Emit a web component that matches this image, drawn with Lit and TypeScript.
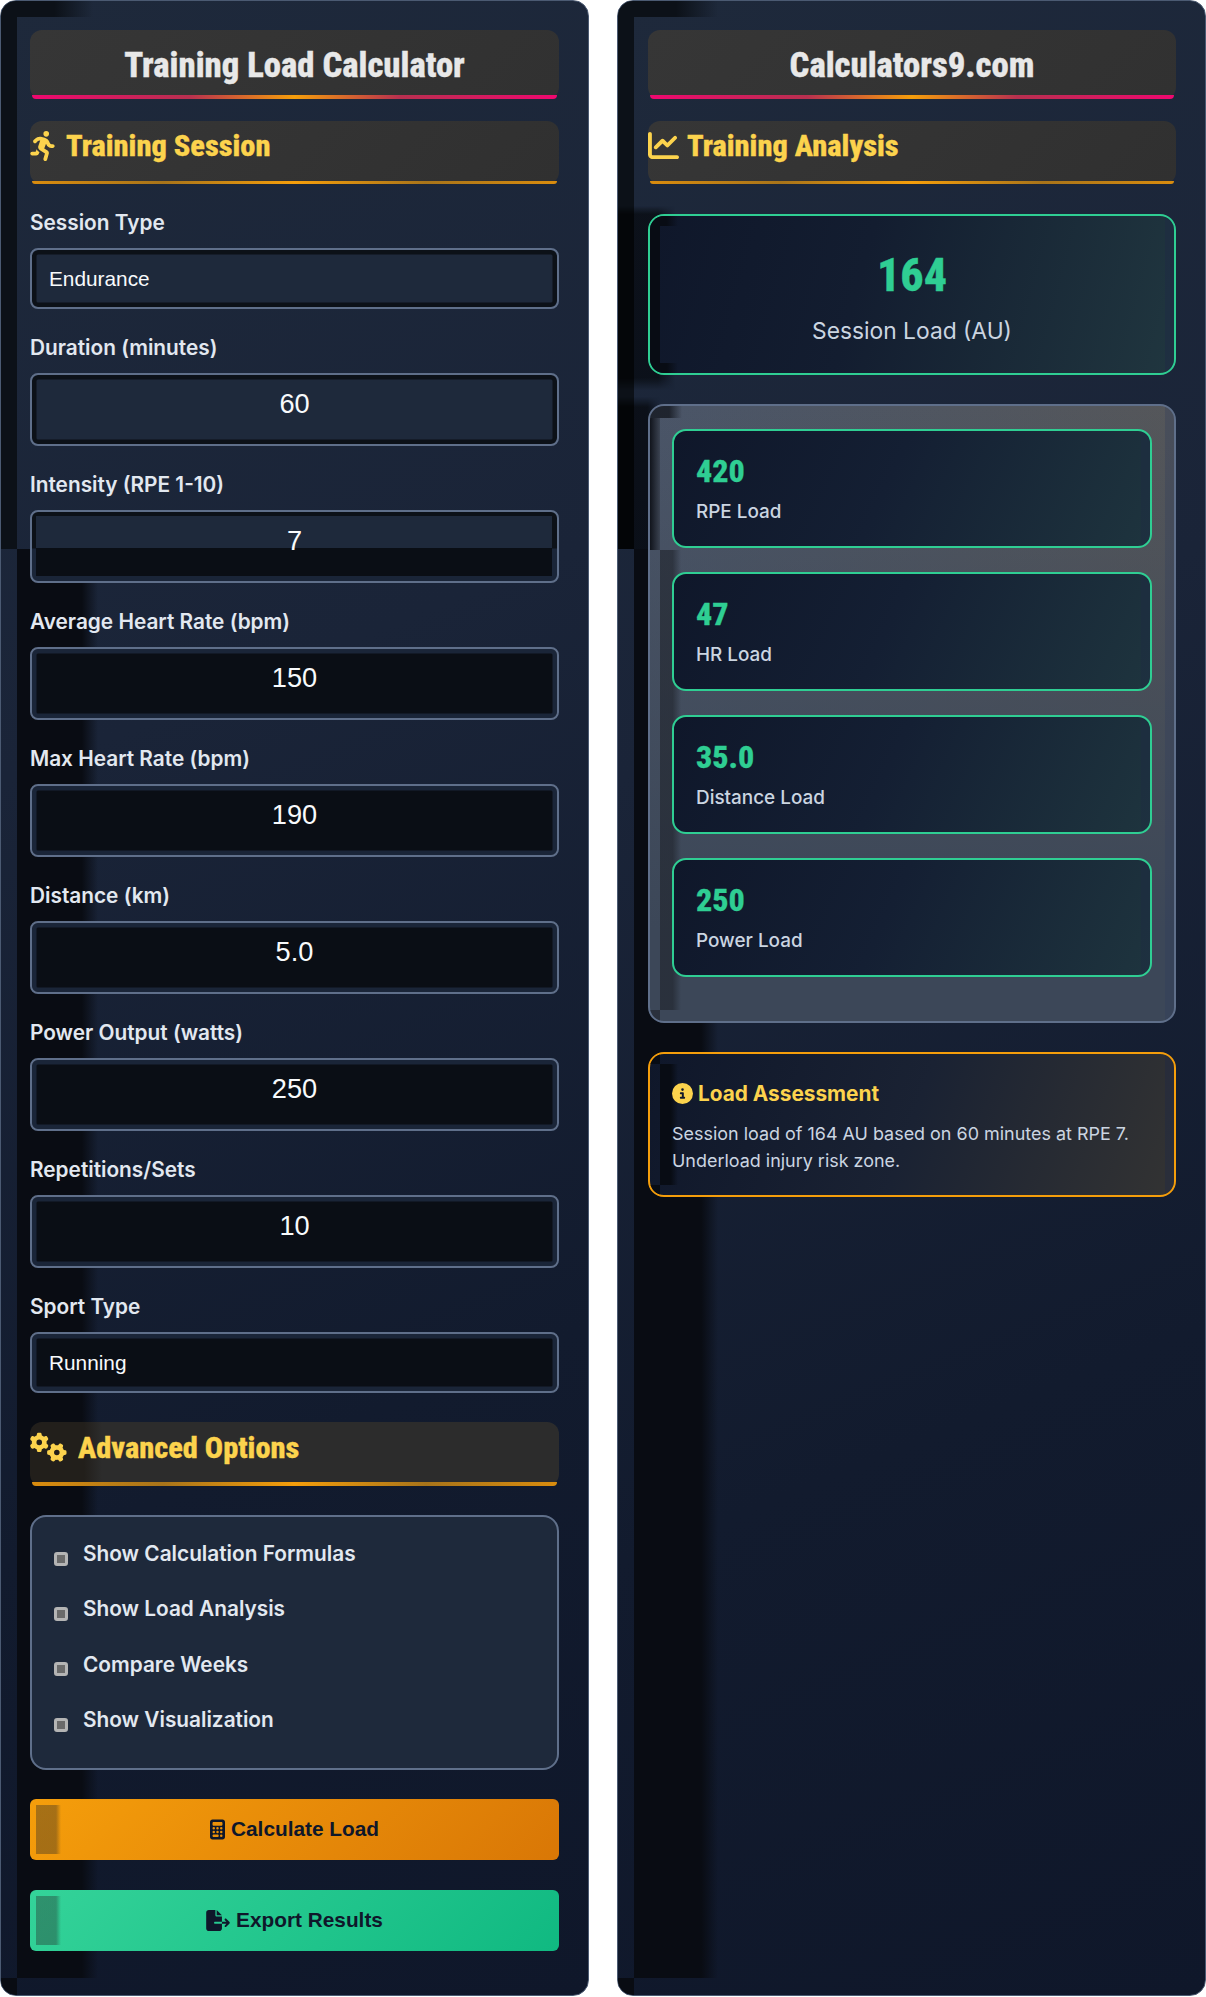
import { LitElement, html, css, svg } from "lit";
import { customElement } from "lit/decorators.js";

const ICONS: Record<string, [string, string]> = {
  run: ["0 0 417 512", "M320 48a48 48 0 1 0-96 0 48 48 0 1 0 96 0zM125.7 175.5c9.9-9.9 23.4-15.5 37.5-15.5c1.9 0 3.8 .1 5.6 .3L137.6 254c-9.3 28 1.7 58.8 26.8 74.5l86.2 53.9-25.4 88.8c-4.9 17 5 34.7 22 39.6s34.7-5 39.6-22l28.7-100.4c5.9-20.6-2.6-42.6-20.7-53.9L238 299l30.9-82.4 5.1 12.3C289 264.7 323.9 288 362.7 288H384c17.7 0 32-14.3 32-32s-14.3-32-32-32H362.7c-12.9 0-24.6-7.8-29.5-19.7l-6.3-15c-14.6-35.1-44.1-61.9-80.5-73.1l-48.7-15c-11.1-3.4-22.7-5.2-34.4-5.2c-31 0-60.8 12.3-82.7 34.3L57.4 153.4c-12.5 12.5-12.5 32.8 0 45.3s32.8 12.5 45.3 0l23.1-23.1zM91.2 352H32c-17.7 0-32 14.3-32 32s14.3 32 32 32h69.6c19 0 36.2-11.2 43.9-28.5L157 361.6l-9.5-6c-17.5-10.9-30.5-26.8-37.9-44.9L91.2 352z"],
  chart: ["0 0 512 512", "M64 64c0-17.7-14.3-32-32-32S0 46.3 0 64V400c0 44.2 35.8 80 80 80H480c17.7 0 32-14.3 32-32s-14.3-32-32-32H80c-8.8 0-16-7.2-16-16V64zm406.6 86.6c12.5-12.5 12.5-32.8 0-45.3s-32.8-12.5-45.3 0L320 210.7l-57.4-57.4c-12.5-12.5-32.8-12.5-45.3 0l-112 112c-12.5 12.5-12.5 32.8 0 45.3s32.8 12.5 45.3 0L240 221.3l57.4 57.4c12.5 12.5 32.8 12.5 45.3 0l128-128z"],
  gears: ["0 0 640 512", "M308.5 135.3c7.1-6.3 9.9-16.2 6.2-25c-2.3-5.3-4.8-10.5-7.6-15.5L304 89.4c-3-5-6.3-9.9-9.8-14.6c-5.7-7.6-15.7-10.1-24.7-7.1l-28.2 9.3c-10.7-8.8-23-16-36.2-20.9L199 27.1c-1.9-9.3-9.1-16.7-18.5-17.8C173.9 8.4 167.2 8 160.4 8h-.7c-6.8 0-13.5 .4-20.1 1.2c-9.4 1.1-16.6 8.6-18.5 17.8L115 56.1c-13.3 5-25.5 12.1-36.2 20.9L50.5 67.8c-9-3-19-.5-24.7 7.1c-3.5 4.7-6.8 9.6-9.9 14.6l-3 5.3c-2.8 5-5.3 10.2-7.6 15.6c-3.7 8.7-.9 18.6 6.2 25l22.2 19.8C32.6 161.9 32 168.9 32 176s.6 14.1 1.7 20.9L11.5 216.7c-7.1 6.3-9.9 16.2-6.2 25c2.3 5.3 4.8 10.5 7.6 15.6l3 5.2c3 5.1 6.3 9.9 9.9 14.6c5.7 7.6 15.7 10.1 24.7 7.1l28.2-9.3c10.7 8.8 23 16 36.2 20.9l6.1 29.1c1.9 9.3 9.1 16.7 18.5 17.8c6.7 .8 13.5 1.2 20.4 1.2s13.7-.4 20.4-1.2c9.4-1.1 16.6-8.6 18.5-17.8l6.1-29.1c13.3-5 25.5-12.1 36.2-20.9l28.2 9.3c9 3 19 .5 24.7-7.1c3.5-4.7 6.8-9.5 9.8-14.6l3.1-5.4c2.8-5 5.3-10.2 7.6-15.5c3.7-8.7 .9-18.6-6.2-25l-22.2-19.8c1.1-6.8 1.7-13.8 1.7-20.9s-.6-14.1-1.7-20.9l22.2-19.8zM112 176a48 48 0 1 1 96 0 48 48 0 1 1 -96 0zM504.7 500.5c6.3 7.1 16.2 9.9 25 6.2c5.3-2.3 10.5-4.8 15.5-7.6l5.4-3.1c5-3 9.9-6.3 14.6-9.8c7.6-5.7 10.1-15.7 7.1-24.7l-9.3-28.2c8.8-10.7 16-23 20.9-36.2l29.1-6.1c9.3-1.9 16.7-9.1 17.8-18.5c.8-6.7 1.2-13.5 1.2-20.4s-.4-13.7-1.2-20.4c-1.1-9.4-8.6-16.6-17.8-18.5L583.9 307c-5-13.3-12.1-25.5-20.9-36.2l9.3-28.2c3-9 .5-19-7.1-24.7c-4.7-3.5-9.6-6.8-14.6-9.9l-5.3-3c-5-2.8-10.2-5.3-15.6-7.6c-8.7-3.7-18.6-.9-25 6.2l-19.8 22.2c-6.8-1.1-13.8-1.7-20.9-1.7s-14.1 .6-20.9 1.7l-19.8-22.2c-6.3-7.1-16.2-9.9-25-6.2c-5.3 2.3-10.5 4.8-15.6 7.6l-5.2 3c-5.1 3-9.9 6.3-14.6 9.9c-7.6 5.7-10.1 15.7-7.1 24.7l9.3 28.2c-8.8 10.7-16 23-20.9 36.2L315.1 313c-9.3 1.9-16.7 9.1-17.8 18.5c-.8 6.7-1.2 13.5-1.2 20.4s.4 13.7 1.2 20.4c1.1 9.4 8.6 16.6 17.8 18.5l29.1 6.1c5 13.3 12.1 25.5 20.9 36.2l-9.3 28.2c-3 9-.5 19 7.1 24.7c4.7 3.5 9.5 6.8 14.6 9.8l5.4 3.1c5 2.8 10.2 5.3 15.5 7.6c8.7 3.7 18.6 .9 25-6.2l19.8-22.2c6.8 1.1 13.8 1.7 20.9 1.7s14.1-.6 20.9-1.7l19.8 22.2zM464 304a48 48 0 1 1 0 96 48 48 0 1 1 0-96z"],
  calc: ["0 0 384 512", "M64 0C28.7 0 0 28.7 0 64V448c0 35.3 28.7 64 64 64H320c35.3 0 64-28.7 64-64V64c0-35.3-28.7-64-64-64H64zM96 64H288c17.7 0 32 14.3 32 32v32c0 17.7-14.3 32-32 32H96c-17.7 0-32-14.3-32-32V96c0-17.7 14.3-32 32-32zm32 160a32 32 0 1 1 -64 0 32 32 0 1 1 64 0zM96 352a32 32 0 1 1 0-64 32 32 0 1 1 0 64zM64 416c0-17.7 14.3-32 32-32h96c17.7 0 32 14.3 32 32s-14.3 32-32 32H96c-17.7 0-32-14.3-32-32zM192 256a32 32 0 1 1 0-64 32 32 0 1 1 0 64zm32 64a32 32 0 1 1 -64 0 32 32 0 1 1 64 0zm64-64a32 32 0 1 1 0-64 32 32 0 1 1 0 64zm32 64a32 32 0 1 1 -64 0 32 32 0 1 1 64 0zM288 448a32 32 0 1 1 0-64 32 32 0 1 1 0 64z"],
  file: ["0 0 576 512", "M0 64C0 28.7 28.7 0 64 0H224V128c0 17.7 14.3 32 32 32H384V288H216c-13.3 0-24 10.7-24 24s10.7 24 24 24H384V448c0 35.3-28.7 64-64 64H64c-35.3 0-64-28.7-64-64V64zM384 336V288H494.1l-39-39c-9.4-9.4-9.4-24.6 0-33.9s24.6-9.4 33.9 0l80 80c9.4 9.4 9.4 24.6 0 33.9l-80 80c-9.4 9.4-24.6 9.4-33.9 0s-9.4-24.6 0-33.9l39-39H384zm0-208H256V0L384 128z"],
  info: ["0 0 512 512", "M256 512A256 256 0 1 0 256 0a256 256 0 1 0 0 512zM216 336h24V272H216c-13.3 0-24-10.7-24-24s10.7-24 24-24h48c13.3 0 24 10.7 24 24v88h8c13.3 0 24 10.7 24 24s-10.7 24-24 24H216c-13.3 0-24-10.7-24-24s10.7-24 24-24zm40-208a32 32 0 1 1 0 64 32 32 0 1 1 0-64z"],
};

function icon(name: string, cls: string) {
  const [vb, d] = ICONS[name];
  return html`<svg class="ico ${cls}" viewBox=${vb} aria-hidden="true">${svg`<path fill="currentColor" d=${d}></path>`}</svg>`;
}

type Field = { label: string; value: string; kind: "select" | "number"; tone: "light" | "split" | "dark" };

const FIELDS: Field[] = [
  { label: "Session Type", value: "Endurance", kind: "select", tone: "light" },
  { label: "Duration (minutes)", value: "60", kind: "number", tone: "light" },
  { label: "Intensity (RPE 1-10)", value: "7", kind: "number", tone: "split" },
  { label: "Average Heart Rate (bpm)", value: "150", kind: "number", tone: "dark" },
  { label: "Max Heart Rate (bpm)", value: "190", kind: "number", tone: "dark" },
  { label: "Distance (km)", value: "5.0", kind: "number", tone: "dark" },
  { label: "Power Output (watts)", value: "250", kind: "number", tone: "dark" },
  { label: "Repetitions/Sets", value: "10", kind: "number", tone: "dark" },
  { label: "Sport Type", value: "Running", kind: "select", tone: "dark" },
];

const OPTIONS = ["Show Calculation Formulas", "Show Load Analysis", "Compare Weeks", "Show Visualization"];
const STATS = [
  ["420", "RPE Load"],
  ["47", "HR Load"],
  ["35.0", "Distance Load"],
  ["250", "Power Load"],
];

@customElement("app-root")
export class AppRoot extends LitElement {
  static styles = css`
    :host {
      display: block;
      width: 1206px;
      background: #fff;
      font-family: Inter, "Liberation Sans", sans-serif;
    }
    * { box-sizing: border-box; }
    .page {
      display: grid;
      grid-template-columns: 589px 589px;
      column-gap: 28px;
      min-height: 1996px;
    }
    .panel {
      position: relative;
      isolation: isolate;
      height: 1996px;
      padding: 29px 29px 0;
      border: 1px solid #4b5a72;
      border-radius: 16px;
      overflow: hidden;
      background: linear-gradient(158deg, #1e293b 0%, #1a2438 35%, #121b2e 70%, #0f172a 100%);
    }
    .panel.right { padding-left: 30px; }
    .content { position: relative; z-index: 1; }

    /* Dark bands baked into the panel's backdrop. */
    .band { position: absolute; z-index: 0; pointer-events: none; }
    .band-top { left: 0; top: 0; width: 92px; height: 16px; background: linear-gradient(90deg, #0c1118 0 58%, transparent); }
    .band-upper { left: 0; top: 16px; width: 16px; height: 532px; background: #0c1118; }
    .band-lower { left: 16px; top: 548px; width: 81px; bottom: 17px; background: linear-gradient(90deg, #090c13 0 80%, transparent); }
    .band-corner { left: 0; bottom: 0; width: 16px; height: 17px; background: #090c13; }
    .right .band-lower { width: 84px; }
    .right .band-top { width: 100px; }
    .halo-a {
      left: 0; top: 205px; width: 57px; height: 184px;
      background: linear-gradient(90deg, rgba(0,0,0,.62) 0 16px, rgba(6,9,14,.72) 16px 70%, transparent);
      -webkit-mask-image: linear-gradient(180deg, transparent, #000 8px, #000 172px, transparent);
      mask-image: linear-gradient(180deg, transparent, #000 8px, #000 172px, transparent);
    }
    .halo-b {
      left: 0; top: 396px; width: 42px; height: 152px;
      background: linear-gradient(90deg, rgba(0,0,0,.7) 0 16px, rgba(6,9,14,.75) 16px 70%, transparent);
      -webkit-mask-image: linear-gradient(180deg, transparent, #000 10px);
      mask-image: linear-gradient(180deg, transparent, #000 10px);
    }

    .title, .section {
      position: relative;
      font-family: "Roboto Condensed", Roboto, sans-serif;
      font-stretch: 75%;
      font-weight: 800;
      -webkit-text-stroke: 0.35px currentColor;
      margin: 0;
    }
    .title {
      height: 68.5px;
      line-height: 70px;
      text-align: center;
      font-size: 34.7px;
      color: #e8e8e8;
      border-radius: 12px;
      background: linear-gradient(135deg, #363636, #313131);
      margin-bottom: 22px;
    }
    .title::after, .section::after {
      content: "";
      position: absolute;
      left: 2px;
      right: 2px;
      bottom: 0;
      height: 3.5px;
      border-radius: 0 0 10px 10px;
    }
    .title::after { background: linear-gradient(90deg, #f0086f, #b8304f 30%, #f59e0b 50%, #b8304f 70%, #f0086f); }
    .section::after { background: linear-gradient(90deg, #d98c0e, #a8741a 25%, #f59e0b 50%, #a8741a 75%, #d98c0e); }
    .section {
      display: flex;
      align-items: center;
      height: 63.5px;
      padding-bottom: 13px;
      font-size: 30.4px;
      color: #fcd34d;
      border-radius: 12px;
      background: linear-gradient(135deg, #363636, #303030);
    }
    .section.adv {
      background: linear-gradient(90deg, #221f1b 0 54px, #2c2c2c 72px);
      margin-top: 29px;
      margin-bottom: 29px;
    }
    .ico { display: block; flex: none; }
    .i-run { width: 25px; height: 30px; margin-right: 11px; }
    .i-chart { width: 31px; height: 31px; margin-right: 8px; }
    .i-gears { width: 37px; height: 30px; margin-right: 11px; }

    .field { margin-top: 24px; }
    .field label {
      display: block;
      height: 28px;
      line-height: 30px;
      margin-bottom: 12px;
      font-size: 20.8px;
      font-weight: 600;
      color: #e2e8f0;
    }
    .ctl {
      display: block;
      width: 100%;
      margin: 0;
      border: 2px solid #5f6f8a;
      border-radius: 8px;
      outline: none;
      appearance: none;
      -webkit-appearance: none;
      color: #f8fafc;
      font-family: "Liberation Sans", Arial, sans-serif;
    }
    select.ctl {
      height: 61px;
      padding: 0 0 0 17px;
      font-size: 20.8px;
    }
    input.ctl {
      height: 73px;
      padding: 0 0 12px;
      text-align: center;
      font-size: 27.2px;
    }
    input[type="number"]::-webkit-inner-spin-button,
    input[type="number"]::-webkit-outer-spin-button { -webkit-appearance: none; margin: 0; }
    .light { background: #1e293b; box-shadow: inset 0 0 0 4.5px #0c1118; }
    .dark { background: #0a0e15; box-shadow: inset 0 0 0 4.5px #1a2538; }
    .split {
      background-repeat: no-repeat;
      background-origin: border-box;
      background-image:
        linear-gradient(90deg, #0c1118 6.5px, transparent 6.5px calc(100% - 6.5px), #0c1118 calc(100% - 6.5px)),
        linear-gradient(90deg, #1a2538 6.5px, transparent 6.5px calc(100% - 6.5px), #1a2538 calc(100% - 6.5px)),
        linear-gradient(180deg, #0c1118 0 6.5px, #1e293b 6.5px 38.5px, #0a0e15 38.5px calc(100% - 6.5px), #1a2538 calc(100% - 6.5px));
      background-size: 100% 38.5px, 100% 100%, 100% 100%;
    }

    .options {
      display: flex;
      flex-direction: column;
      gap: 24px;
      height: 255px;
      padding: 23.5px 22px;
      background: #1e293b;
      border: 2px solid #5f6f8a;
      border-radius: 16px;
      margin-bottom: 29px;
    }
    .opt {
      display: flex;
      align-items: flex-start;
      height: 31.4px;
      font-size: 20.8px;
      font-weight: 600;
      line-height: 28px;
      color: #e2e8f0;
    }
    .opt input {
      appearance: none;
      -webkit-appearance: none;
      flex: none;
      width: 14px;
      height: 14px;
      margin: 11.5px 15px 0 0;
      border: 3px solid #b4b4b4;
      border-radius: 3px;
      background: #6a6a6a;
    }

    .btn {
      position: relative;
      display: flex;
      align-items: center;
      justify-content: center;
      gap: 4px;
      width: 100%;
      height: 61px;
      padding: 0;
      margin: 0 0 30px;
      border: 0;
      border-radius: 6px;
      overflow: hidden;
      font-family: "Liberation Sans", Arial, sans-serif;
      font-size: 20.8px;
      font-weight: 700;
      color: #0f172a;
    }
    .btn::before {
      content: "";
      position: absolute;
      left: 6px;
      top: 6px;
      bottom: 6px;
      width: 25px;
      background: linear-gradient(90deg, rgba(40,40,40,.38) 80%, transparent);
    }
    .btn span { position: relative; }
    .calc { background: linear-gradient(135deg, #f59e0b, #d97706); }
    .exp { background: linear-gradient(135deg, #34d399, #10b981); margin-bottom: 0; }
    .i-calc { width: 15px; height: 21px; position: relative; margin-right: 2px; }
    .i-file { width: 24px; height: 21px; position: relative; margin-right: 2px; }

    .result, .stat, .assess { position: relative; overflow: hidden; }
    .result {
      height: 161.5px;
      margin-top: 29.5px;
      margin-bottom: 29px;
      padding-top: 33px;
      text-align: center;
      border: 2px solid #2fce93;
      border-radius: 16px;
      background: linear-gradient(105deg, #0f172a 0%, #131d30 40%, #20363f 100%);
    }
    .result .v {
      position: relative;
      font: 800 46px/52px "Roboto Condensed", Roboto, sans-serif;
      font-stretch: 75%;
      -webkit-text-stroke: 0.35px currentColor;
      color: #2fce93;
    }
    .result .l {
      position: relative;
      margin-top: 15.5px;
      font-size: 22.8px;
      line-height: 30px;
      color: #cbd5e1;
    }
    /* Shifted inset shading inside each boxed element. */
    .sh { position: absolute; pointer-events: none; }
    .result .sh-l { left: 0; top: 10px; bottom: 10px; width: 10px; background: #080c14; }
    .result .sh-t { left: 0; top: 0; width: 28px; height: 10px; background: linear-gradient(90deg, #080c14 60%, transparent); }
    .result .sh-b { left: 0; bottom: 0; width: 28px; height: 10px; background: linear-gradient(90deg, #080c14 60%, transparent); }
    .sh-r { right: 0; top: 0; bottom: 0; width: 9px; background: rgba(30,41,70,.4); }

    .stats {
      position: relative;
      height: 619px;
      padding: 23px 22px;
      border: 2px solid #5f6f8a;
      border-radius: 16px;
      overflow: hidden;
      margin-bottom: 29px;
      background:
        linear-gradient(180deg, rgba(60,71,88,0) 0%, #3c4758 85%),
        linear-gradient(100deg, #4a5568, #575757);
    }
    .stats .s-tl { left: 0; top: 0; width: 32px; height: 12px; background: linear-gradient(90deg, rgba(20,24,32,.8) 60%, transparent); }
    .stats .s-ul { left: 0; top: 12px; width: 10px; height: 132px; background: linear-gradient(90deg, rgba(14,17,24,.95), rgba(50,56,68,.6)); }
    .stats .s-ll { left: 10px; top: 144px; bottom: 11px; width: 21px; background: linear-gradient(90deg, rgba(30,34,42,.6) 60%, transparent); }
    .stats .s-c { left: 0; bottom: 0; width: 10px; height: 11px; background: rgba(30,34,42,.6); }
    .stats .s-r { right: 0; top: 0; bottom: 0; width: 9px; background: rgba(45,60,92,.3); }
    .stat {
      height: 119px;
      margin-bottom: 24px;
      padding: 23px 22px 0;
      border: 2px solid #2fce93;
      border-radius: 14px;
      background: linear-gradient(115deg, #0f172a 0%, #141f33 45%, #1e343e 100%);
    }
    .stat .sh-r { background: rgba(30,41,70,.25); }
    .stat .v {
      position: relative;
      font: 800 32px/34px "Roboto Condensed", Roboto, sans-serif;
      font-stretch: 75%;
      -webkit-text-stroke: 0.3px currentColor;
      color: #2fce93;
    }
    .stat .l {
      position: relative;
      margin-top: 10px;
      font-size: 18.9px;
      font-weight: 500;
      line-height: 28px;
      color: #cbd5e1;
    }

    .assess {
      height: 144.5px;
      padding: 25px 22px 0;
      border: 2px solid #f59e0b;
      border-radius: 16px;
      background: linear-gradient(110deg, #0f172a 0%, #1a2233 50%, #333 100%);
    }
    .assess .a-c1 { left: 0; top: 0; width: 10px; height: 10px; background: #080c14; }
    .assess .a-c2 { left: 0; bottom: 0; width: 10px; height: 10px; background: #080c14; }
    .assess .a-s { left: 10px; top: 10px; bottom: 10px; width: 18px; background: linear-gradient(90deg, #080c14 60%, transparent); }
    .assess h3 {
      position: relative;
      display: flex;
      align-items: center;
      gap: 5px;
      margin: 0;
      height: 28px;
      font-size: 20.8px;
      font-weight: 700;
      color: #fcd34d;
    }
    .i-info { width: 21px; height: 21px; }
    .assess p {
      position: relative;
      margin: 13px 0 0;
      font-size: 17.95px;
      line-height: 27px;
      color: #cbd5e1;
    }
  `;

  private ctl(f: Field) {
    if (f.kind === "select") {
      return html`<select class="ctl ${f.tone}" aria-label=${f.label}><option>${f.value}</option></select>`;
    }
    return html`<input class="ctl ${f.tone}" type="number" .value=${f.value} aria-label=${f.label} />`;
  }

  private bands() {
    return html`
      <div class="band band-top"></div>
      <div class="band band-upper"></div>
      <div class="band band-lower"></div>
      <div class="band band-corner"></div>
    `;
  }

  render() {
    return html`
      <div class="page">
        <section class="panel left">
          ${this.bands()}
          <div class="content">
            <h1 class="title">Training Load Calculator</h1>
            <h2 class="section">${icon("run", "i-run")}Training Session</h2>
            ${FIELDS.map(
              (f) => html`<div class="field"><label>${f.label}</label>${this.ctl(f)}</div>`
            )}
            <h2 class="section adv">${icon("gears", "i-gears")}Advanced Options</h2>
            <div class="options">
              ${OPTIONS.map(
                (o) => html`<label class="opt"><input type="checkbox" />${o}</label>`
              )}
            </div>
            <button class="btn calc">${icon("calc", "i-calc")}<span>Calculate Load</span></button>
            <button class="btn exp">${icon("file", "i-file")}<span>Export Results</span></button>
          </div>
        </section>
        <section class="panel right">
          ${this.bands()}
          <div class="band halo-a"></div>
          <div class="band halo-b"></div>
          <div class="content">
            <h1 class="title">Calculators9.com</h1>
            <h2 class="section">${icon("chart", "i-chart")}Training Analysis</h2>
            <div class="result">
              <div class="sh sh-l"></div><div class="sh sh-t"></div><div class="sh sh-b"></div><div class="sh sh-r"></div>
              <div class="v">164</div>
              <div class="l">Session Load (AU)</div>
            </div>
            <div class="stats">
              <div class="sh s-tl"></div><div class="sh s-ul"></div><div class="sh s-ll"></div><div class="sh s-c"></div><div class="sh s-r"></div>
              ${STATS.map(
                ([v, l]) => html`<div class="stat"><div class="sh sh-r"></div><div class="v">${v}</div><div class="l">${l}</div></div>`
              )}
            </div>
            <div class="assess">
              <div class="sh a-c1"></div><div class="sh a-c2"></div><div class="sh a-s"></div><div class="sh sh-r"></div>
              <h3>${icon("info", "i-info")}Load Assessment</h3>
              <p>Session load of 164 AU based on 60 minutes at RPE 7. Underload injury risk zone.</p>
            </div>
          </div>
        </section>
      </div>
    `;
  }
}
